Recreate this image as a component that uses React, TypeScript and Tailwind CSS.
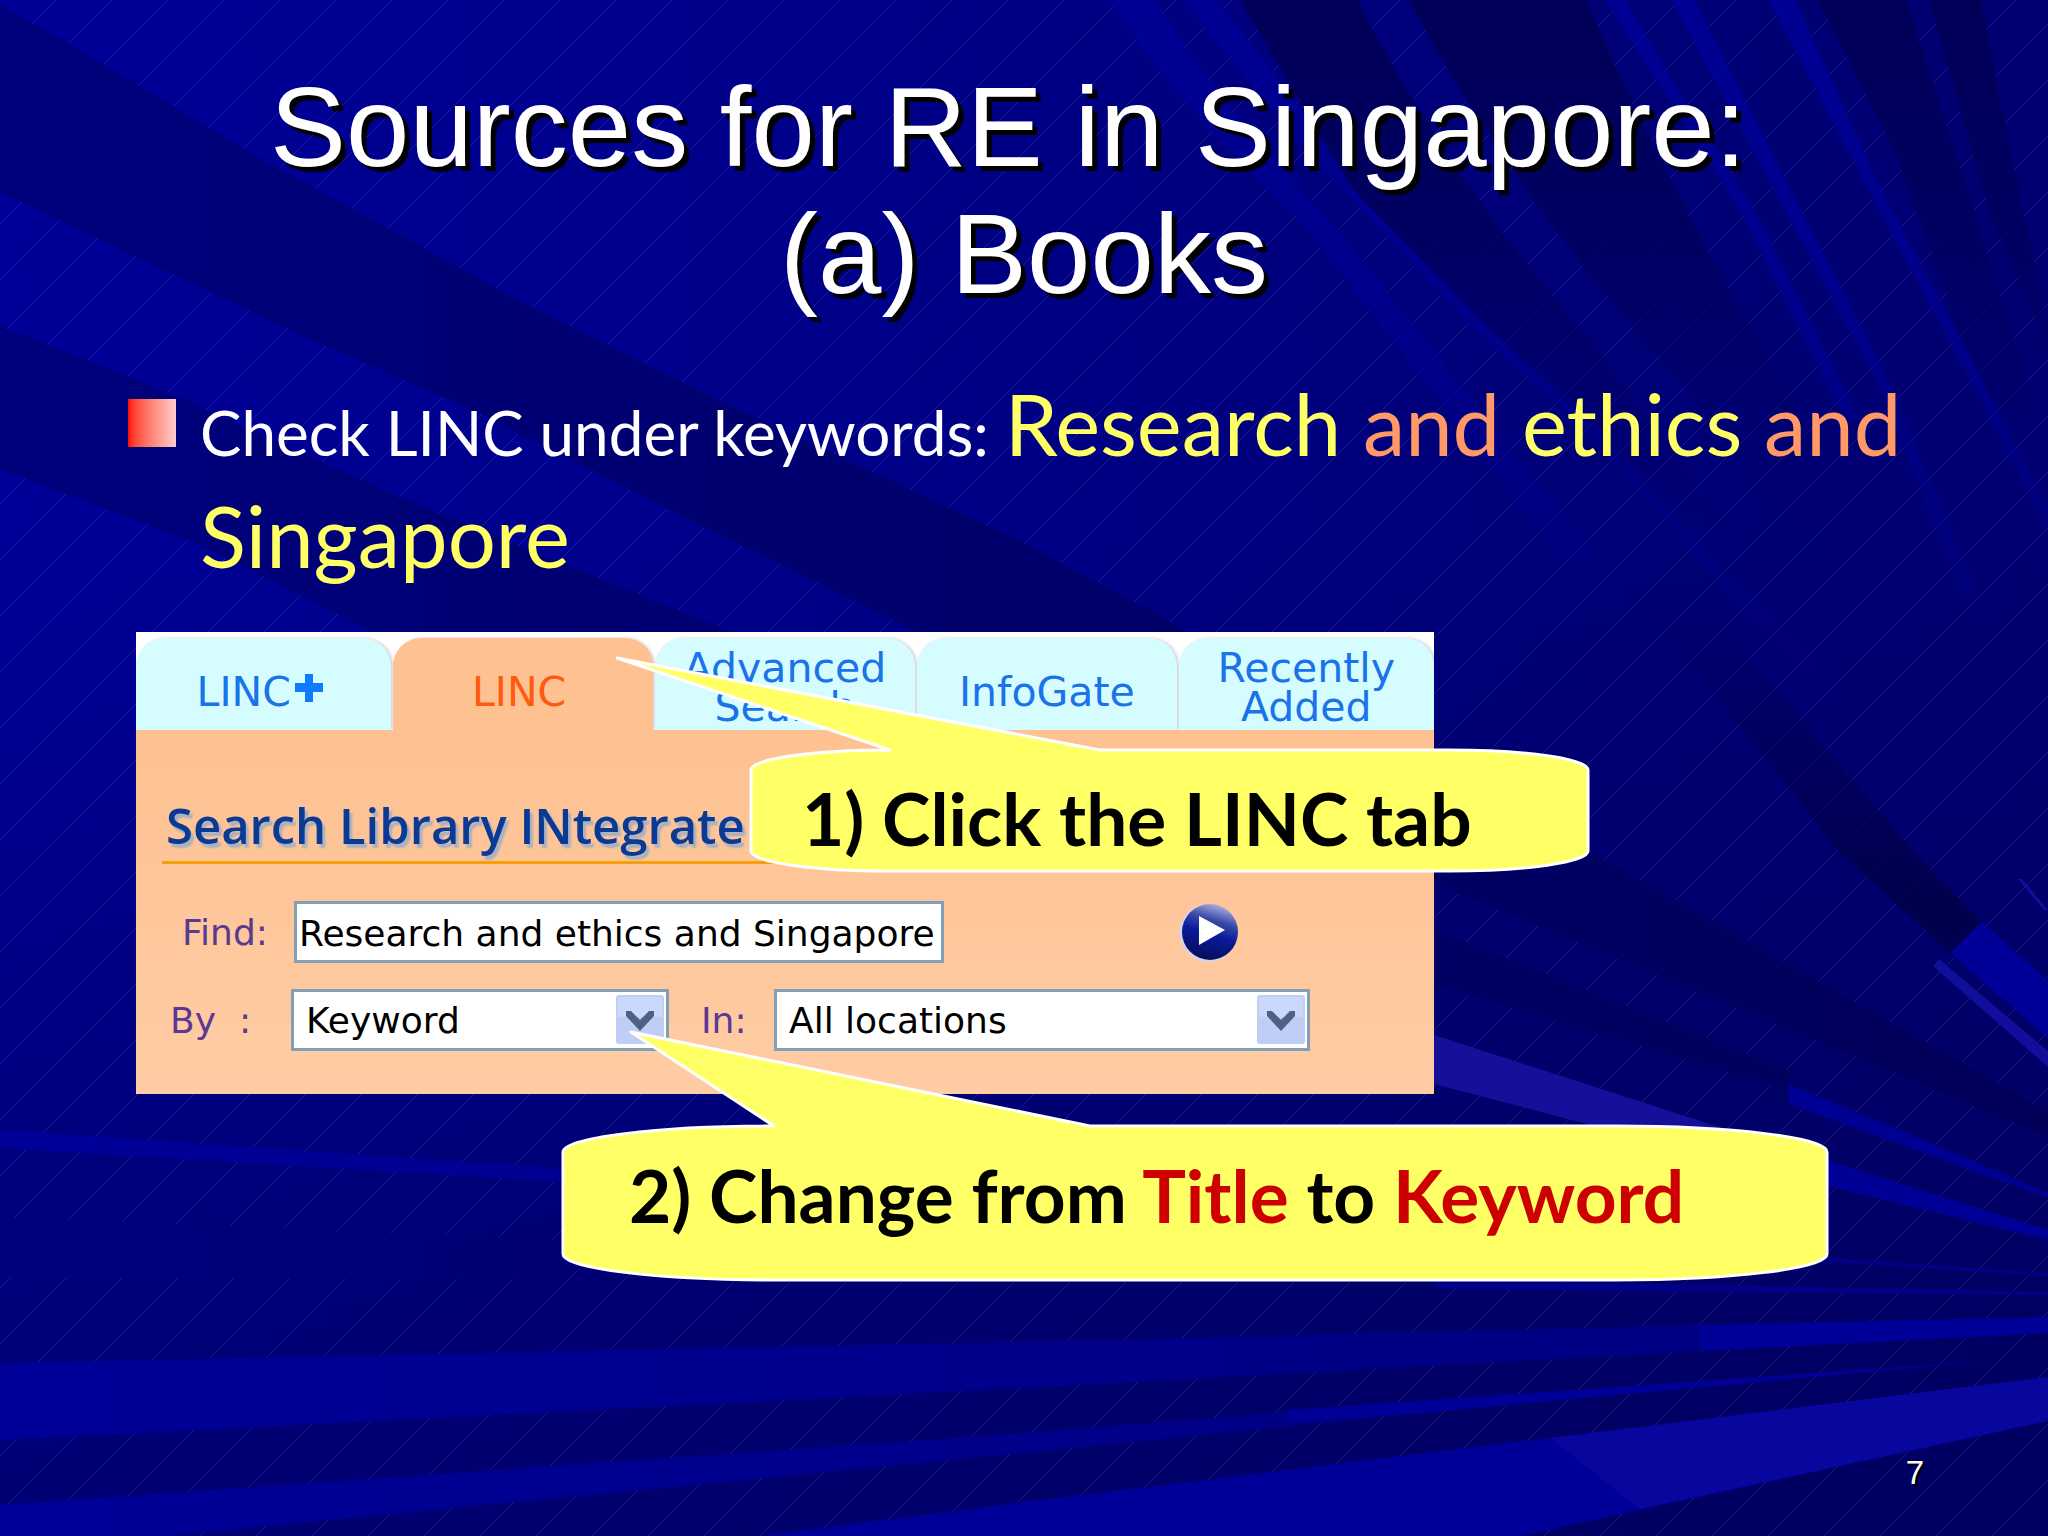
import type { ReactNode } from "react";

const tabs = [
  { label: "LINC", plus: true, active: false },
  { label: "LINC", plus: false, active: true },
  { label: "Advanced\nSearch", plus: false, active: false },
  { label: "InfoGate", plus: false, active: false },
  { label: "Recently\nAdded", plus: false, active: false },
];

// wide bands that sweep from the left edge towards the lower right
const darkBands = [
  "M0 5 L65 41 L261 159 L522 302 L718 400 L1024 543 L1500 800 L2048 1112 L2048 1136 L1450 890 L901 624 L653 502 L477 412 L281 326 L0 192 Z",
  "M0 326 L176 396 L392 494 L712 624 L1435 930 L1788 1070 L1788 1090 L1435 985 L366 628 L196 543 L0 469 Z",
  "M0 1217 L562 1240 L562 1280 L0 1277 Z",
];

// fan in the upper right corner, fades out downwards
const darkFan = [
  "M1240 0 L1357 0 Q1450 180 1579 326 L1800 620 L1740 640 L1592 429 L1481 326 L1351 187 Z",
  "M1409 0 L1586 0 Q1650 150 1742 312 L1860 520 L1790 520 L1677 379 Q1510 190 1409 0 Z",
  "M1818 0 L1906 0 L1964 180 L2040 420 L1985 400 L1893 147 Z",
  "M1929 0 L1981 0 L2000 100 L2048 330 L2048 350 L1990 214 Z",
];

const streaks = [
  "M1109 0 L1155 0 Q1230 120 1330 220 L1600 560 L1560 560 L1300 220 Q1180 110 1109 0 Z",
  "M1605 0 L1625 0 L1692 112 L1757 214 L1860 420 L1845 420 L1742 214 L1677 112 Z",
  "M1671 0 L1694 0 L1785 179 L1890 384 L1980 600 L1965 600 L1878 384 L1768 179 Z",
  "M1769 0 L1795 0 L1880 187 L1970 357 L2048 510 L2048 534 L1958 357 L1867 187 Z",
  "M1184 0 L1215 0 Q1300 100 1351 187 L1481 320 L1592 423 L1716 566 L1850 700 L1838 700 L1708 571 L1584 429 L1470 326 L1340 187 Q1270 110 1184 0 Z",
];

const softBands = [
  "M0 1363 L1024 1342 L1700 1325 L1701 1351 L1024 1388 L0 1440 Z",
  "M0 1505 L1024 1433 L1400 1403 L1400 1415 L1024 1453 L163 1536 L0 1536 Z",
  "M0 1130 L562 1168 L562 1182 L0 1148 Z",
];

const brightBands = [
  { d: "M1950 953 L1982 922 L2048 981 L2048 1038 Z", fill: "#000099" },
  { d: "M1933 966 L1939 959 L2048 1051 L2048 1067 Z", fill: "#100e9a" },
  { d: "M1400 1024 L1722 1128 L1602 1128 L1400 1075 Z", fill: "#14109a" },
  { d: "M1788 1084 L1900 1130 L2048 1193 L2048 1198 L1789 1104 Z", fill: "#000092" },
  { d: "M1800 1152 L2048 1230 L2048 1240 L1800 1179 Z", fill: "#000096" },
  { d: "M1435 1279 L2048 1292 L2048 1295 L1435 1289 Z", fill: "#000088" },
  { d: "M1800 1256 L2048 1273 L2048 1276 L1800 1260 Z", fill: "#000088" },
  { d: "M1700 1325 L2048 1317 L2048 1333 L1701 1351 Z", fill: "#000099" },
  { d: "M1288 1410 L1987 1361 L1400 1415 L1288 1422 Z", fill: "#000099" },
  { d: "M758 1536 L1024 1502 L1400 1456 L2048 1377 L2048 1421 L1520 1536 Z", fill: "#000099" },
  { d: "M1550 1438 L2048 1377 L2048 1421 L1640 1509 Z", fill: "#08069c" },
  { d: "M2018 879 L2022 879 L2048 910 L2044 910 Z", fill: "#100e9a" },
];

function Backdrop() {
  return (
    <svg
      className="absolute inset-0 h-full w-full"
      viewBox="0 0 2048 1536"
      preserveAspectRatio="none"
      aria-hidden="true"
    >
      <defs>
        <linearGradient id="base" x1="0" y1="0" x2="1" y2="0">
          <stop offset="0" stopColor="#000098" />
          <stop offset="0.45" stopColor="#000087" />
          <stop offset="0.75" stopColor="#000078" />
          <stop offset="1" stopColor="#000072" />
        </linearGradient>
        <linearGradient id="fade" x1="0" y1="0" x2="0" y2="1">
          <stop offset="0.35" stopColor="#000050" stopOpacity="0" />
          <stop offset="0.8" stopColor="#000050" stopOpacity="0.4" />
          <stop offset="1" stopColor="#000050" stopOpacity="0.5" />
        </linearGradient>
        <linearGradient id="dark" gradientUnits="userSpaceOnUse" x1="0" y1="0" x2="2048" y2="0">
          <stop offset="0" stopColor="#00007d" />
          <stop offset="0.5" stopColor="#00006c" />
          <stop offset="1" stopColor="#000058" />
        </linearGradient>
        <linearGradient id="fan" gradientUnits="userSpaceOnUse" x1="0" y1="0" x2="0" y2="600">
          <stop offset="0" stopColor="#000058" />
          <stop offset="0.4" stopColor="#000062" />
          <stop offset="0.9" stopColor="#00006c" stopOpacity="0" />
        </linearGradient>
        <linearGradient id="corner" gradientUnits="userSpaceOnUse" x1="0" y1="600" x2="0" y2="900">
          <stop offset="0" stopColor="#00004e" stopOpacity="0" />
          <stop offset="1" stopColor="#00004e" />
        </linearGradient>
        <linearGradient id="streak" gradientUnits="userSpaceOnUse" x1="0" y1="0" x2="0" y2="720">
          <stop offset="0" stopColor="#000094" />
          <stop offset="0.4" stopColor="#00008c" />
          <stop offset="1" stopColor="#00008c" stopOpacity="0" />
        </linearGradient>
        <linearGradient id="soft" gradientUnits="userSpaceOnUse" x1="0" y1="0" x2="2048" y2="0">
          <stop offset="0" stopColor="#000099" />
          <stop offset="0.7" stopColor="#000084" />
          <stop offset="1" stopColor="#000088" />
        </linearGradient>
        <pattern id="hatch" width="56" height="56" patternUnits="userSpaceOnUse">
          <path d="M0 56 L56 0" stroke="#8080d0" strokeOpacity="0.2" strokeWidth="1" />
        </pattern>
      </defs>
      <rect width="2048" height="1536" fill="url(#base)" />
      <rect width="2048" height="1536" fill="url(#fade)" />
      <rect width="2048" height="1536" fill="url(#hatch)" />
      {darkBands.map((d) => (
        <path key={d} d={d} fill="url(#dark)" />
      ))}
      {darkFan.map((d) => (
        <path key={d} d={d} fill="url(#fan)" />
      ))}
      <path d="M1640 600 L1700 600 L1912 850 L1982 922 L1950 953 L1838 850 Z" fill="url(#corner)" />
      {streaks.map((d) => (
        <path key={d} d={d} fill="url(#streak)" />
      ))}
      {softBands.map((d) => (
        <path key={d} d={d} fill="url(#soft)" />
      ))}
      {brightBands.map((b) => (
        <path key={b.d} d={b.d} fill={b.fill} />
      ))}
    </svg>
  );
}

function SelectBox({ id, value, className }: { id: string; value: string; className: string }) {
  return (
    <div className={`relative h-[62px] ${className}`}>
      <select
        id={id}
        defaultValue={value}
        className="h-full w-full appearance-none border-[3px] border-[#829fb5] bg-white pl-3 pt-[2px] text-[36px] text-black"
      >
        <option>{value}</option>
      </select>
      <svg
        className="pointer-events-none absolute right-[5px] top-[6px] h-[49px] w-12"
        viewBox="0 0 48 49"
        aria-hidden="true"
      >
        <rect width="48" height="49" rx="3" fill="#c0cdf6" />
        <rect x="2" y="2" width="44" height="20" rx="2" fill="#cbd8fb" />
        <path d="M10 16 H15 L24 25 L33 16 H38 V21 L24 36 L10 21 Z" fill="#4d6185" />
      </svg>
    </div>
  );
}

function Callout({ box, viewBox, d, children }: { box: string; viewBox: string; d: string; children: ReactNode }) {
  return (
    <div className={`pointer-events-none absolute ${box}`}>
      <svg className="absolute inset-0 h-full w-full" viewBox={viewBox} aria-hidden="true">
        <path d={d} fill="#ffff66" stroke="#ffffff" strokeWidth="3" strokeLinejoin="round" />
      </svg>
      <p className="relative whitespace-nowrap font-['Lato',sans-serif] text-[73px] font-bold leading-[88px] text-black">
        {children}
      </p>
    </div>
  );
}

export default function App() {
  return (
    <main className="relative flex min-h-screen flex-col overflow-hidden bg-[#000080]">
      <Backdrop />

      {/* Title */}
      <h1 className="relative whitespace-pre pt-[63px] text-center font-['Liberation_Sans',Arial,sans-serif] text-[114px] leading-[127px] text-white [text-shadow:5px_5px_1px_#000]">
        {"Sources for RE in Singapore:\u00a0\n(a) Books"}
      </h1>

      {/* Bullet */}
      <ul className="relative mt-[50px] pl-32 pr-20">
        <li className="flex gap-6">
          <span className="mt-8 size-12 shrink-0 bg-linear-to-r from-[#ff0000] to-[#ffcccc]" />
          <p className="font-['Lato',sans-serif] text-[85px] leading-[112px] text-[#ffff66]">
            <span className="text-[62px] leading-none text-white">Check LINC under keywords: </span>
            Research <span className="text-[#ff9966]">and</span> ethics{" "}
            <span className="text-[#ff9966]">and</span>
            <br />
            Singapore
          </p>
        </li>
      </ul>

      {/* Catalogue search */}
      <section className="relative ml-[136px] mt-[41px] w-[1298px] font-['DejaVu_Sans',sans-serif]">
        <div
          role="tablist"
          className="grid grid-cols-[256fr_260fr_261fr_260fr_256fr] gap-[2px] overflow-hidden bg-white pt-[6px]"
        >
          {tabs.map((tab, i) => (
            <button
              key={i}
              type="button"
              role="tab"
              aria-selected={tab.active}
              className={`flex h-[92px] items-center justify-center rounded-t-[28px] text-[41px] leading-[39px] shadow-[2px_0_3px_#d8d0d8] ${
                tab.active ? "bg-[#fec191] pr-2 text-[#ff5a10]" : "bg-[#d5fcfe] text-[#1a73e8]"
              } ${tab.label.includes("\n") ? "pt-2" : "pt-4"}`}
            >
              <span className="whitespace-pre">{tab.label}</span>
              {tab.plus && (
                <svg className="mb-2 mr-2 ml-1 size-7" viewBox="0 0 28 28" aria-hidden="true">
                  <path d="M10 0 H18 V9 H28 V18 H18 V28 H10 V18 H0 V9 H10 Z" fill="#0f7bff" />
                </svg>
              )}
            </button>
          ))}
        </div>

        <form
          className="h-[364px] bg-linear-to-b from-[#fec191] to-[#ffcca5] pl-[26px]"
          onSubmit={(e) => e.preventDefault()}
        >
          <h2 className="mr-[26px] border-b-[3px] border-[#f79f0b] pb-[6px] pl-1 pt-[66px] font-['Open_Sans',sans-serif] text-[49px] font-semibold leading-[59px] text-[#0b3a94] [text-shadow:3px_4px_2px_#a9b0c0]">
            Search Library INtegrate
          </h2>

          <div className="mt-[37px] flex items-center">
            <label htmlFor="find" className="w-[132px] pl-5 pt-[2px] text-[36px] text-[#5a3a90]">
              Find:
            </label>
            <input
              id="find"
              type="text"
              defaultValue="Research and ethics and Singapore"
              className="h-[62px] w-[650px] border-[3px] border-[#829fb5] bg-white pl-[2px] pt-[2px] text-[36px] text-black"
            />
            <button type="submit" aria-label="Search" className="ml-[235px] h-[60px] w-[60px]">
              <svg viewBox="0 0 60 60" aria-hidden="true">
                <defs>
                  <linearGradient id="ball" x1="0.7" y1="0" x2="0.4" y2="1">
                    <stop offset="0" stopColor="#b4b8e6" />
                    <stop offset="0.3" stopColor="#3a49a8" />
                    <stop offset="0.55" stopColor="#0a1a9c" />
                    <stop offset="1" stopColor="#060d58" />
                  </linearGradient>
                </defs>
                <circle cx="29" cy="31" r="29" fill="#d9d3e4" />
                <circle cx="31" cy="30" r="28" fill="url(#ball)" />
                <path d="M20 14 L46 28 L20 43 Z" fill="#ffffff" />
              </svg>
            </button>
          </div>

          <div className="mt-[26px] flex items-center">
            <label htmlFor="by" className="w-[129px] whitespace-pre pl-2 pt-[2px] text-[36px] text-[#5a3a90]">
              {"By  :"}
            </label>
            <SelectBox id="by" value="Keyword" className="w-[378px]" />
            <label htmlFor="in" className="w-[105px] pl-8 pt-[2px] text-[36px] text-[#5a3a90]">
              In:
            </label>
            <SelectBox id="in" value="All locations" className="w-[536px]" />
          </div>
        </form>

        <Callout
          box="left-[480px] top-[24px] h-[217px] w-[974px] pl-[186px] pt-[118px]"
          viewBox="0 0 974 217"
          d="M135 114 A139 20 0 0 1 274 94 L1 2 L484 94 H833 A139 20 0 0 1 972 114 V195 A139 20 0 0 1 833 215 H274 A139 20 0 0 1 135 195 Z"
        >
          1) Click the LINC tab
        </Callout>
        <Callout
          box="left-[425px] top-[398px] h-[252px] w-[1268px] pl-[68px] pt-[121px]"
          viewBox="0 0 1268 252"
          d="M2 122 A211 26 0 0 1 213 96 L70 2 L529 96 H1055 A211 26 0 0 1 1266 122 V224 A211 26 0 0 1 1055 250 H213 A211 26 0 0 1 2 224 Z"
        >
          2) Change from <span className="text-[#cc0000]">Title</span> to{" "}
          <span className="text-[#cc0000]">Keyword</span>
        </Callout>
      </section>

      {/* Slide number */}
      <footer className="relative mt-auto pb-11 pr-[124px] text-right font-['Liberation_Sans',Arial,sans-serif] text-[33px] leading-[38px] text-white [text-shadow:2px_2px_1px_#000]">
        7
      </footer>
    </main>
  );
}
